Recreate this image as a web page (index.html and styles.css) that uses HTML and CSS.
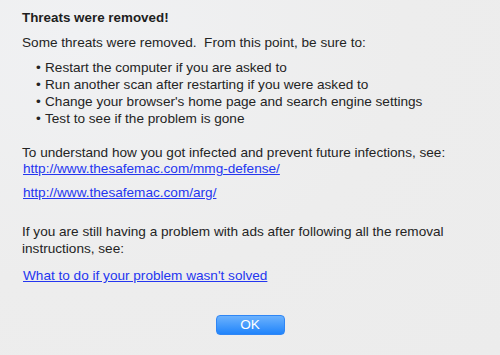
FILE: index.html
```html
<!DOCTYPE html>
<html>
<head>
<meta charset="utf-8">
<link rel="stylesheet" href="styles.css">
</head>
<body>
<div class="dialog">
  <h1 class="title">Threats were removed!</h1>
  <p class="intro">Some threats were removed.&nbsp; From this point, be sure to:</p>
  <ul class="steps">
    <li>Restart the computer if you are asked to</li>
    <li>Run another scan after restarting if you were asked to</li>
    <li>Change your browser's home page and search engine settings</li>
    <li>Test to see if the problem is gone</li>
  </ul>
  <p class="para">To understand how you got infected and prevent future infections, see:</p>
  <a class="link link-first" href="#">http://www.thesafemac.com/mmg-defense/</a>
  <a class="link link-second" href="#">http://www.thesafemac.com/arg/</a>
  <p class="para para-ads">If you are still having a problem with ads after following all the removal instructions, see:</p>
  <a class="link link-third" href="#">What to do if your problem wasn't solved</a>
  <div class="actions">
    <button class="ok">OK</button>
  </div>
</div>
</body>
</html>
```
FILE: styles.css
```css
html, body {
  margin: 0;
  padding: 0;
  width: 500px;
  height: 355px;
  overflow: hidden;
}
body {
  background: radial-gradient(ellipse at 15% 10%, #f0f1f3 0%, #ededed 55%, #ececec 100%);
  font-family: "Liberation Sans", Arial, sans-serif;
  font-size: 13.6px;
  color: #242424;
}
.dialog {
  padding: 9px 22px 0 22px;
  display: flex;
  flex-direction: column;
  align-items: flex-start;
}
.title {
  margin: 0;
  font-size: 13.4px;
  font-weight: bold;
  line-height: 17px;
  color: #1e1e1e;
}
.intro {
  margin: 8px 0 0 0;
  line-height: 17px;
}
.steps {
  list-style: none;
  margin: 8px 0 0 0;
  padding: 0;
  line-height: 17px;
}
.steps li {
  display: flex;
}
.steps li::before {
  content: "\2022";
  margin-left: 14px;
  width: 9px;
}
.para {
  margin: 17px 0 0 0;
  line-height: 17px;
}
.para-ads {
  margin-top: 22px;
}
.link {
  display: block;
  color: #2436f0;
  text-decoration: underline;
  line-height: 16px;
  margin-left: 1px;
}
.link-second {
  margin-top: 8px;
}
.link-third {
  margin-top: 11px;
}
.actions {
  align-self: stretch;
  display: flex;
  justify-content: center;
  margin-top: 31px;
}
.ok {
  width: 69px;
  height: 20px;
  padding: 0;
  border: 1px solid #2f86f5;
  border-radius: 4px;
  background: linear-gradient(#6cb2fd, #2084fb);
  color: #ffffff;
  font-family: "Liberation Sans", Arial, sans-serif;
  font-size: 13.6px;
  line-height: 18px;
}
```
